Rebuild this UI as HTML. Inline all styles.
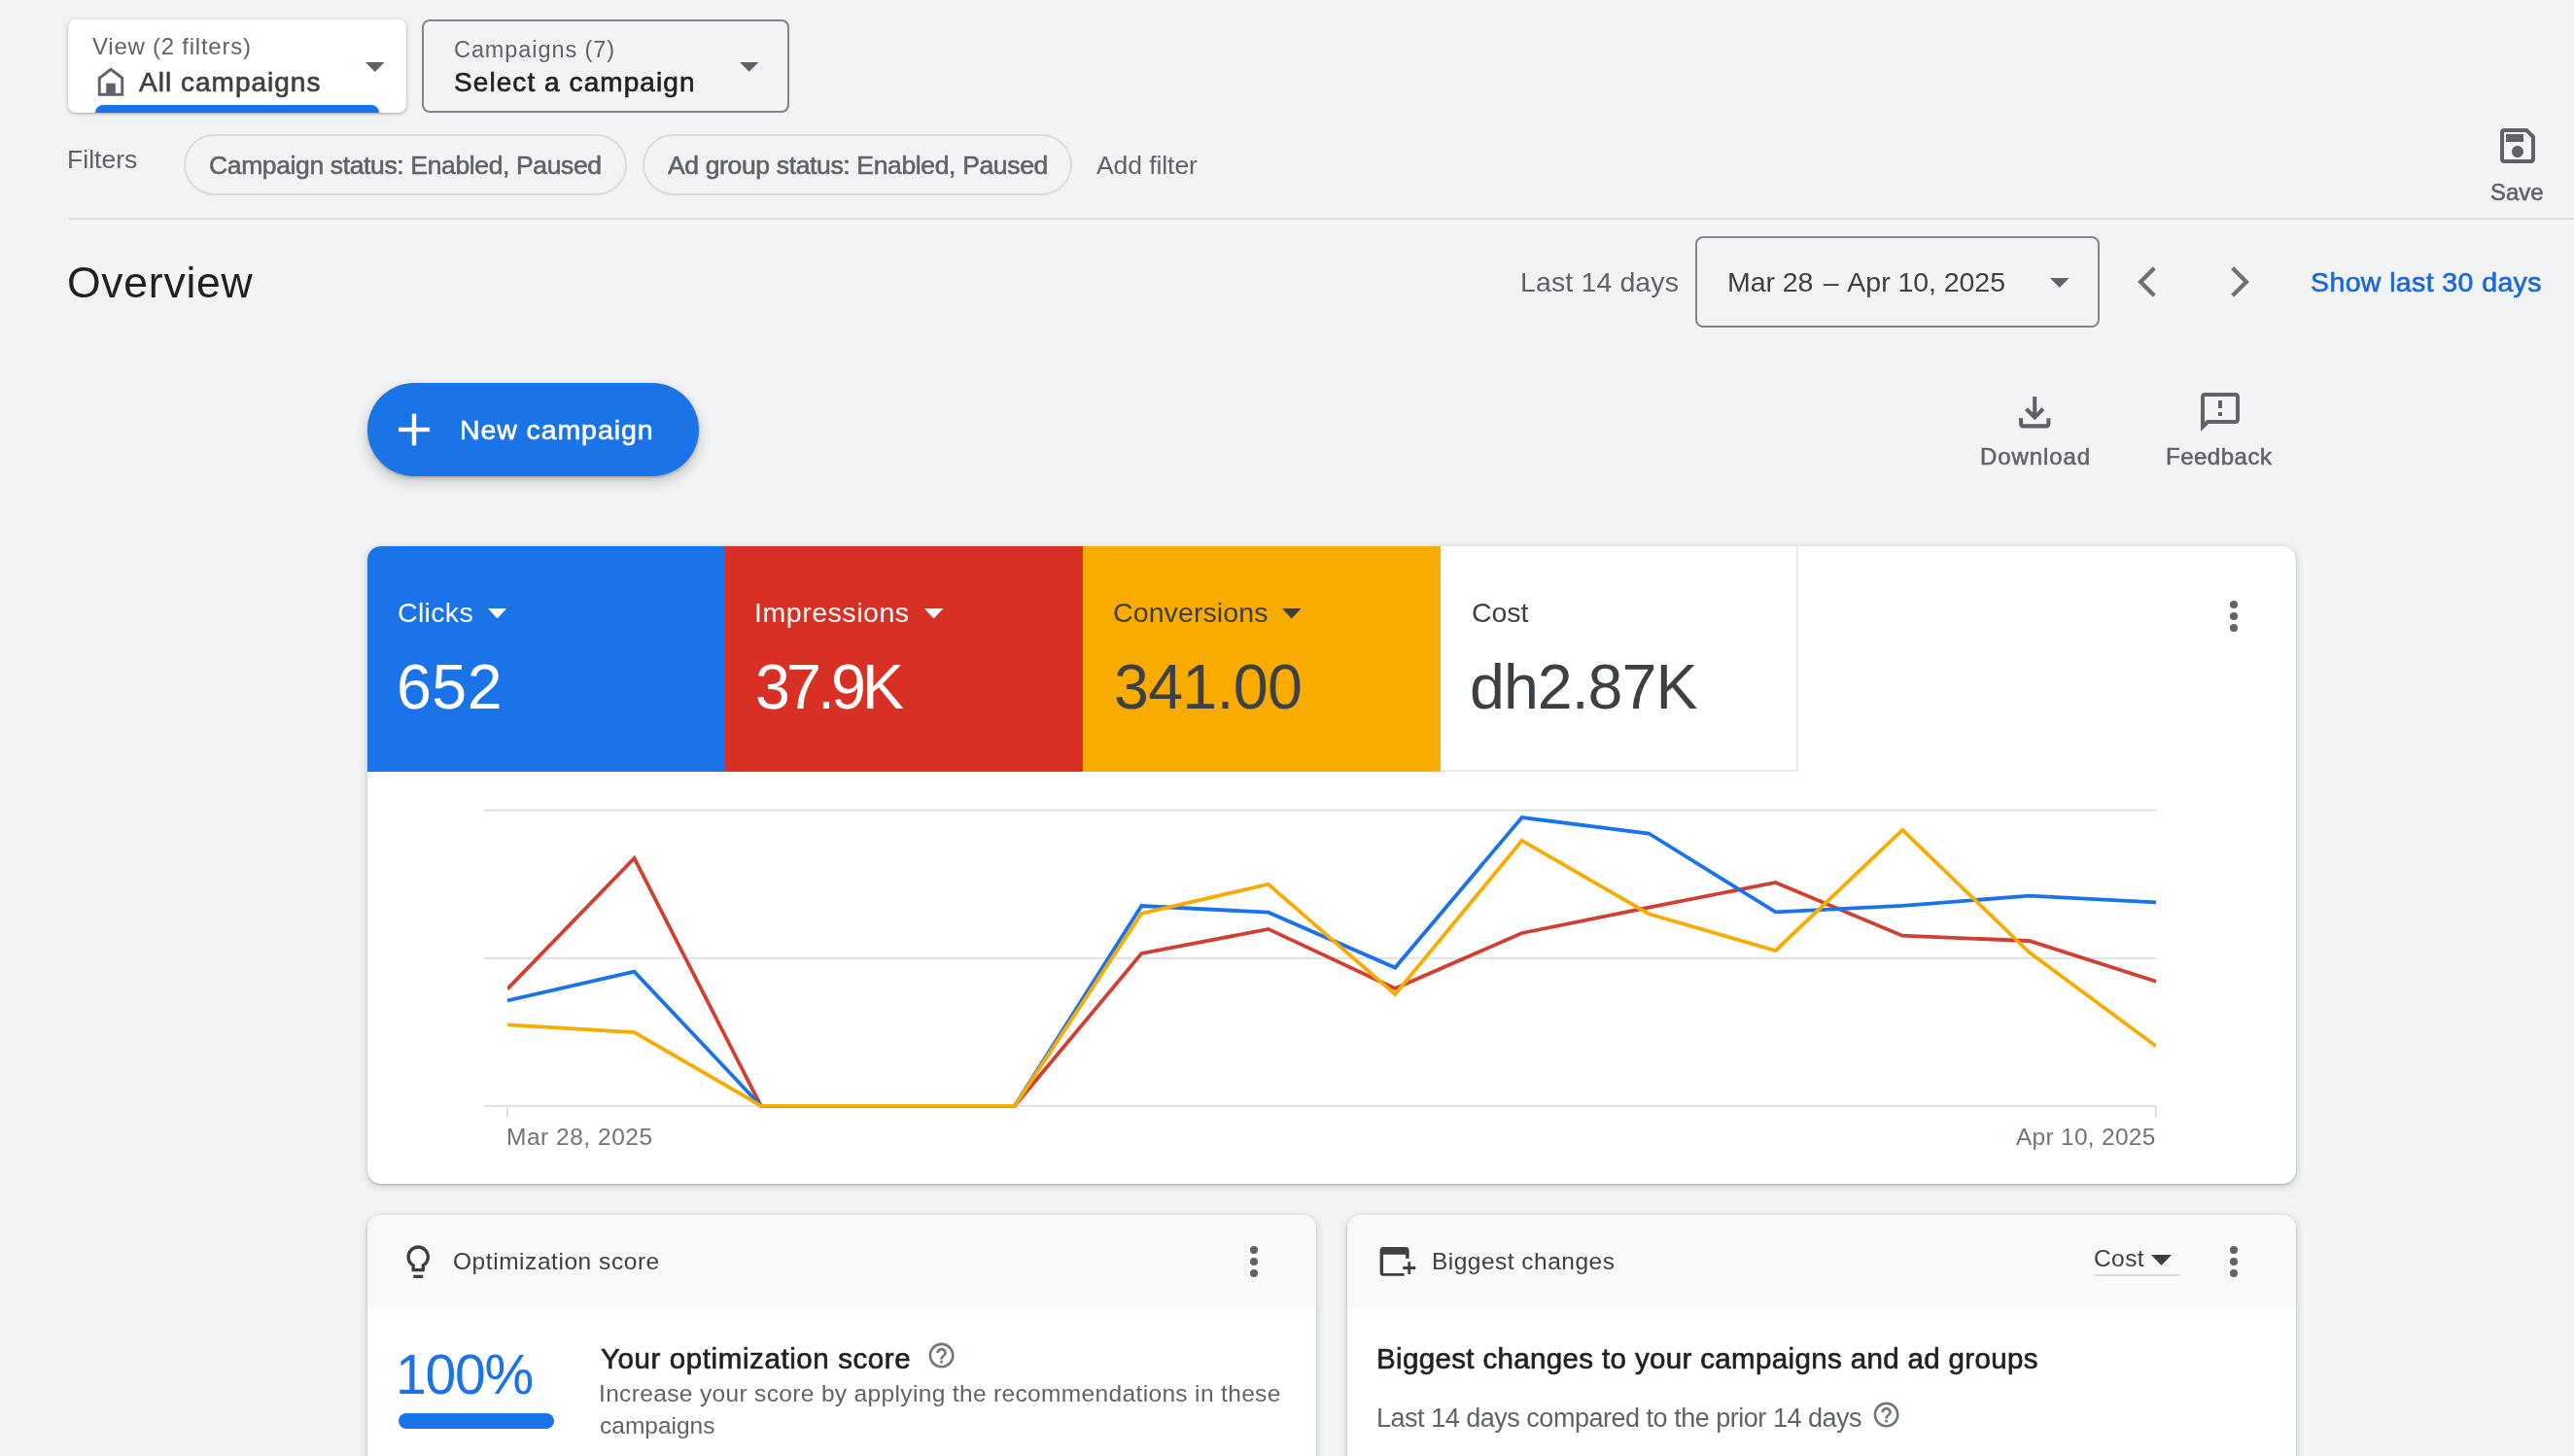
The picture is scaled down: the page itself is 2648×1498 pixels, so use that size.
<!DOCTYPE html><html><head><meta charset="utf-8"><title>Overview</title><style>
*{margin:0;padding:0;box-sizing:border-box}
html,body{width:2648px;height:1498px;overflow:hidden;background:#f1f3f4;font-family:"Liberation Sans",sans-serif}
.t{position:absolute;white-space:nowrap;line-height:1;will-change:transform}
.a{position:absolute}
</style></head><body>
<div class="a" style="left:70px;top:20px;width:348px;height:96px;background:#fff;border-radius:8px;box-shadow:0 1px 2px rgba(60,64,67,.3),0 1px 4px 1px rgba(60,64,67,.15)"></div>
<div class="a" style="left:98px;top:107.5px;width:292px;height:8.5px;background:#1a73e8;border-radius:8px 8px 0 0"></div>
<svg class="a" style="left:0;top:0" width="200" height="120"><path d="M102.25,80.3 L114,71.3 L125.75,80.3 L125.75,97.3 L102.25,97.3 Z" fill="none" stroke="#5f6368" stroke-width="2.9"/><rect x="109.2" y="85.7" width="9.6" height="12" fill="#5f6368"/></svg>
<svg class="a" style="left:376.0px;top:63.9px" width="19.4" height="10.1" viewBox="0 0 19.4 10.1"><path d="M0,0 L19.4,0 L9.7,10.1 Z" fill="#5f6368"/></svg>
<div class="a" style="left:434px;top:20px;width:378px;height:96px;border:2px solid #80868b;border-radius:8px"></div>
<svg class="a" style="left:760.9px;top:64.2px" width="19.4" height="9.8" viewBox="0 0 19.4 9.8"><path d="M0,0 L19.4,0 L9.7,9.8 Z" fill="#5f6368"/></svg>
<div class="a" style="left:189.4px;top:138.2px;width:455.2px;height:63px;border:2px solid #dadce0;border-radius:32px"></div>
<div class="a" style="left:661.2px;top:138.2px;width:441.4px;height:63px;border:2px solid #dadce0;border-radius:32px"></div>
<div class="a" style="left:70px;top:224px;width:2578px;height:2px;background:#dadce0"></div>
<svg class="a" style="left:2566px;top:125.8px" width="48" height="48" viewBox="0 0 24 24"><path fill="#5f6368" d="M17 3H5c-1.11 0-2 .9-2 2v14c0 1.1.89 2 2 2h14c1.1 0 2-.9 2-2V7l-4-4zm2 16H5V5h11.17L19 7.83V19zm-7-7c-1.66 0-3 1.34-3 3s1.34 3 3 3 3-1.34 3-3-1.34-3-3-3zM6 6h9v4H6z"/></svg>
<div class="a" style="left:1744px;top:243px;width:416px;height:94px;border:2px solid #80868b;border-radius:8px"></div>
<svg class="a" style="left:2109.0px;top:285.8px" width="19.7" height="10.0" viewBox="0 0 19.7 10.0"><path d="M0,0 L19.7,0 L9.8,10.0 Z" fill="#5f6368"/></svg>
<svg class="a" style="left:2190px;top:268px" width="140" height="44"><path d="M26.3,7.8 L12.1,22 L26.3,36.2" fill="none" stroke="#707070" stroke-width="4.3"/><path d="M106.7,7.8 L120.9,22 L106.7,36.2" fill="none" stroke="#707070" stroke-width="4.3"/></svg>
<div class="a" style="left:378px;top:394px;width:341px;height:96px;background:#1b73e8;border-radius:48px;box-shadow:0 2px 3px rgba(60,64,67,.3),0 6px 10px 4px rgba(60,64,67,.15)"></div>
<svg class="a" style="left:405px;top:420px" width="42" height="42"><rect x="5" y="19.8" width="32" height="4.4" fill="#fff"/><rect x="18.8" y="5.7" width="4.4" height="32.6" fill="#fff"/></svg>
<svg class="a" style="left:2069.17px;top:399.52px" width="48.46" height="48.46" viewBox="0 0 24 24"><path fill="#5f6368" d="M12 16L7 11l1.4-1.45 2.6 2.6V4h2v8.15l2.6-2.6L17 11zm-6 4q-.825 0-1.412-.587Q4 18.825 4 18v-3h2v3h12v-3h2v3q0 .825-.587 1.413Q18.825 20 18 20z"/></svg>
<svg class="a" style="left:2259.75px;top:399.9px" width="48" height="48" viewBox="0 0 24 24"><path fill="#5f6368" d="M20 2H4c-1.1 0-1.99.9-1.99 2L2 22l4-4h14c1.1 0 2-.9 2-2V4c0-1.1-.9-2-2-2zm0 14H5.17l-.59.59-.58.58V4h16v12zm-9-4h2v2h-2zm0-6h2v4h-2z"/></svg>
<div class="a" style="left:378px;top:562px;width:1984px;height:656px;background:#fff;border-radius:14px;box-shadow:0 1px 2px rgba(60,64,67,.3),0 2px 6px 2px rgba(60,64,67,.15);overflow:hidden"><div class="a" style="left:0;top:0;width:368px;height:232px;background:#1a73e8"></div><div class="a" style="left:368px;top:0;width:368px;height:232px;background:#d93025"></div><div class="a" style="left:736px;top:0;width:368px;height:232px;background:#f9ab00"></div><div class="a" style="left:1104px;top:0;width:368px;height:232px;border-right:2px solid #e8eaed;border-bottom:2px solid #e8eaed"></div></div>
<svg class="a" style="left:502.0px;top:625.5px" width="19.0" height="10.5" viewBox="0 0 19.0 10.5"><path d="M0,0 L19.0,0 L9.5,10.5 Z" fill="#ffffff"/></svg>
<svg class="a" style="left:950.5px;top:625.5px" width="19.3" height="10.5" viewBox="0 0 19.3 10.5"><path d="M0,0 L19.3,0 L9.6,10.5 Z" fill="#ffffff"/></svg>
<svg class="a" style="left:1319.0px;top:625.5px" width="19.4" height="10.5" viewBox="0 0 19.4 10.5"><path d="M0,0 L19.4,0 L9.7,10.5 Z" fill="#3c4043"/></svg>
<div class="a" style="left:2293.6px;top:617.9px;width:8.2px;height:8.2px;border-radius:50%;background:#5f6368"></div><div class="a" style="left:2293.6px;top:629.9px;width:8.2px;height:8.2px;border-radius:50%;background:#5f6368"></div><div class="a" style="left:2293.6px;top:641.9px;width:8.2px;height:8.2px;border-radius:50%;background:#5f6368"></div>
<svg style="position:absolute;left:0;top:0" width="2648" height="1498" viewBox="0 0 2648 1498"><rect x="498" y="832.6" width="1720" height="2" fill="#e0e0e0"/><rect x="498" y="984.8" width="1720" height="2" fill="#e0e0e0"/><rect x="498" y="1136.8" width="1720" height="2" fill="#e0e0e0"/><rect x="521" y="1138" width="2" height="12" fill="#e0e0e0"/><rect x="2217" y="1138" width="2" height="12" fill="#e0e0e0"/><defs><clipPath id="cc"><rect x="522" y="780" width="1696" height="400"/></clipPath></defs><g clip-path="url(#cc)"><polyline points="522.0,1017.6 652.5,883.0 782.9,1137.8 913.4,1137.8 1043.8,1137.8 1174.3,981.0 1304.8,955.9 1435.2,1017.0 1565.7,960.0 1696.2,933.6 1826.6,908.0 1957.1,962.7 2087.5,968.0 2218.0,1009.7" fill="none" stroke="#d23f31" stroke-width="3.8" stroke-linejoin="miter" stroke-miterlimit="10"/><polyline points="522.0,1029.4 652.5,999.7 782.9,1137.8 913.4,1137.8 1043.8,1137.8 1174.3,932.0 1304.8,938.7 1435.2,995.6 1565.7,841.0 1696.2,857.5 1826.6,938.4 1957.1,931.8 2087.5,921.7 2218.0,928.3" fill="none" stroke="#1a73e8" stroke-width="3.8" stroke-linejoin="miter" stroke-miterlimit="10"/><polyline points="522.0,1054.3 652.5,1062.0 782.9,1137.8 913.4,1137.8 1043.8,1137.8 1174.3,940.0 1304.8,909.7 1435.2,1023.0 1565.7,864.9 1696.2,940.2 1826.6,978.0 1957.1,853.8 2087.5,979.8 2218.0,1076.3" fill="none" stroke="#f9ab00" stroke-width="3.8" stroke-linejoin="miter" stroke-miterlimit="10"/></g></svg>
<div class="a" style="left:378.0px;top:1250px;width:976.0px;height:300px;background:#fff;border-radius:14px;box-shadow:0 1px 2px rgba(60,64,67,.3),0 2px 6px 2px rgba(60,64,67,.15);overflow:hidden"><div class="a" style="left:0;top:0;width:100%;height:95.5px;background:#f8f9fa"></div></div>
<div class="a" style="left:1385.5px;top:1250px;width:976.5px;height:300px;background:#fff;border-radius:14px;box-shadow:0 1px 2px rgba(60,64,67,.3),0 2px 6px 2px rgba(60,64,67,.15);overflow:hidden"><div class="a" style="left:0;top:0;width:100%;height:95.5px;background:#f8f9fa"></div></div>
<div class="a" style="left:1285.6px;top:1281.7px;width:8.2px;height:8.2px;border-radius:50%;background:#5f6368"></div><div class="a" style="left:1285.6px;top:1293.7px;width:8.2px;height:8.2px;border-radius:50%;background:#5f6368"></div><div class="a" style="left:1285.6px;top:1305.7px;width:8.2px;height:8.2px;border-radius:50%;background:#5f6368"></div>
<div class="a" style="left:2293.6px;top:1281.7px;width:8.2px;height:8.2px;border-radius:50%;background:#5f6368"></div><div class="a" style="left:2293.6px;top:1293.7px;width:8.2px;height:8.2px;border-radius:50%;background:#5f6368"></div><div class="a" style="left:2293.6px;top:1305.7px;width:8.2px;height:8.2px;border-radius:50%;background:#5f6368"></div>
<svg class="a" style="left:409.77px;top:1277.88px" width="40.46" height="40.46" viewBox="0 0 24 24"><path fill="#3c4043" d="M9 21c0 .55.45 1 1 1h4c.55 0 1-.45 1-1v-1H9v1zm3-19C8.14 2 5 5.14 5 9c0 2.38 1.19 4.470 3 5.74V17c0 .55.45 1 1 1h6c.55 0 1-.45 1-1v-2.26c1.81-1.27 3-3.36 3-5.74 0-3.86-3.14-7-7-7zm2.85 11.1l-.85.6V16h-4v-2.3l-.85-.6C7.8 12.16 7 10.63 7 9c0-2.76 2.24-5 5-5s5 2.24 5 5c0 1.63-.8 3.160-2.150 4.1z"/></svg>
<svg class="a" style="left:1412px;top:1274px" width="52" height="48"><path fill="#3c4043" d="M7.6,12.6 Q7.6,9.07 11.1,9.07 L34.1,9.07 Q37.6,9.07 37.6,12.6 L37.6,20.8 L34.1,20.8 L34.1,16.8 L11.05,16.8 L11.05,35.9 L32.6,35.9 L32.6,38.7 L11.1,38.7 Q7.6,38.7 7.6,35.2 Z"/><rect x="36.3" y="24.2" width="2.8" height="12.7" fill="#3c4043"/><rect x="31.2" y="29" width="13" height="3" fill="#3c4043"/></svg>
<div class="a" style="left:409.7px;top:1454.3px;width:160px;height:15.5px;border-radius:8px;background:#1a73e8"></div>
<svg class="a" style="left:953.3px;top:1379.3px" width="31.2" height="31.2" viewBox="0 0 24 24"><path fill="#70757a" d="M11 18h2v-2h-2v2zm1-16C6.48 2 2 6.48 2 12s4.48 10 10 10 10-4.48 10-10S17.54 2 12 2zm0 18c-4.41 0-8-3.59-8-8s3.59-8 8-8 8 3.59 8 8-3.59 8-8 8zm0-14c-2.210 0-4 1.79-4 4h2c0-1.1.9-2 2-2s2 .9 2 2c0 2-3 1.75-3 5h2c0-2.25 3-2.5 3-5 0-2.21-1.79-4-4-4z"/></svg>
<svg class="a" style="left:1924.9px;top:1440.0px" width="31.2" height="31.2" viewBox="0 0 24 24"><path fill="#70757a" d="M11 18h2v-2h-2v2zm1-16C6.48 2 2 6.48 2 12s4.48 10 10 10 10-4.48 10-10S17.54 2 12 2zm0 18c-4.41 0-8-3.59-8-8s3.59-8 8-8 8 3.59 8 8-3.59 8-8 8zm0-14c-2.210 0-4 1.79-4 4h2c0-1.1.9-2 2-2s2 .9 2 2c0 2-3 1.75-3 5h2c0-2.25 3-2.5 3-5 0-2.21-1.79-4-4-4z"/></svg>
<svg class="a" style="left:2213.0px;top:1291.0px" width="21.0" height="11.0" viewBox="0 0 21.0 11.0"><path d="M0,0 L21.0,0 L10.5,11.0 Z" fill="#3c4043"/></svg>
<div class="a" style="left:2155px;top:1311px;width:87px;height:2px;background:#dadce0"></div>
<div class="t" id="t_view" style="left:94.59px;top:36.01px;font-size:24.00px;letter-spacing:0.753px;color:#5f6368;">View (2 filters)</div>
<div class="t" id="t_allc" style="left:142.95px;top:71.41px;font-size:28.00px;letter-spacing:1.013px;color:#3c4043;-webkit-text-stroke:0.62px #3c4043;">All campaigns</div>
<div class="t" id="t_camps" style="left:467.41px;top:39.60px;font-size:23.50px;letter-spacing:0.910px;color:#5f6368;">Campaigns (7)</div>
<div class="t" id="t_select" style="left:467.33px;top:70.60px;font-size:28.00px;letter-spacing:1.071px;color:#202124;-webkit-text-stroke:0.62px #202124;">Select a campaign</div>
<div class="t" id="t_filters" style="left:69.03px;top:151.10px;font-size:26.50px;letter-spacing:0.032px;color:#5f6368;">Filters</div>
<div class="t" id="t_chip1" style="left:215.25px;top:157.41px;font-size:26.50px;letter-spacing:-0.367px;color:#5f6368;-webkit-text-stroke:0.58px #5f6368;">Campaign status: Enabled, Paused</div>
<div class="t" id="t_chip2" style="left:686.95px;top:157.41px;font-size:26.50px;letter-spacing:-0.353px;color:#5f6368;-webkit-text-stroke:0.58px #5f6368;">Ad group status: Enabled, Paused</div>
<div class="t" id="t_addf" style="left:1127.55px;top:157.41px;font-size:26.50px;letter-spacing:-0.076px;color:#5f6368;">Add filter</div>
<div class="t" id="t_save" style="left:2562.41px;top:186.01px;font-size:24.00px;letter-spacing:-0.016px;color:#5f6368;-webkit-text-stroke:0.53px #5f6368;">Save</div>
<div class="t" id="t_over" style="left:69.19px;top:268.71px;font-size:44.50px;letter-spacing:0.749px;color:#202124;">Overview</div>
<div class="t" id="t_last14" style="left:1564.36px;top:276.40px;font-size:28.50px;letter-spacing:0.123px;color:#5f6368;">Last 14 days</div>
<div class="t" id="t_date" style="left:1776.96px;top:276.40px;font-size:28.50px;letter-spacing:-0.051px;color:#3c4043;">Mar 28 <span style="margin:0 2.5px">–</span> Apr 10, 2025</div>
<div class="t" id="t_show30" style="left:2376.51px;top:276.21px;font-size:28.50px;letter-spacing:0.388px;color:#1967d2;-webkit-text-stroke:0.63px #1967d2;">Show last 30 days</div>
<div class="t" id="t_newc" style="left:473.06px;top:427.90px;font-size:28.50px;letter-spacing:0.907px;color:#ffffff;-webkit-text-stroke:0.63px #ffffff;">New campaign</div>
<div class="t" id="t_dl" style="left:2036.53px;top:458.21px;font-size:24.00px;letter-spacing:0.897px;color:#5f6368;-webkit-text-stroke:0.53px #5f6368;">Download</div>
<div class="t" id="t_fb" style="left:2228.03px;top:458.21px;font-size:24.00px;letter-spacing:0.504px;color:#5f6368;-webkit-text-stroke:0.53px #5f6368;">Feedback</div>
<div class="t" id="t_clicks" style="left:409.25px;top:615.51px;font-size:28.50px;letter-spacing:0.335px;color:#ffffff;">Clicks</div>
<div class="t" id="t_impr" style="left:776.37px;top:615.51px;font-size:28.50px;letter-spacing:0.542px;color:#ffffff;">Impressions</div>
<div class="t" id="t_conv" style="left:1145.15px;top:615.51px;font-size:28.50px;letter-spacing:0.107px;color:#3c4043;">Conversions</div>
<div class="t" id="t_cost" style="left:1513.55px;top:615.51px;font-size:28.50px;letter-spacing:-0.051px;color:#3c4043;">Cost</div>
<div class="t" id="t_v1" style="left:407.72px;top:674.71px;font-size:64.50px;letter-spacing:0.447px;color:#ffffff;">652</div>
<div class="t" id="t_v2" style="left:777.14px;top:674.71px;font-size:64.50px;letter-spacing:-3.895px;color:#ffffff;">37.9K</div>
<div class="t" id="t_v3" style="left:1145.54px;top:674.71px;font-size:64.50px;letter-spacing:-0.701px;color:#3c4043;">341.00</div>
<div class="t" id="t_v4" style="left:1512.29px;top:674.71px;font-size:64.50px;letter-spacing:-0.980px;color:#3c4043;">dh2.87K</div>
<div class="t" id="t_d1" style="left:520.99px;top:1158.01px;font-size:24.50px;letter-spacing:0.515px;color:#70757a;">Mar 28, 2025</div>
<div class="t" id="t_d2" style="left:2074.35px;top:1158.01px;font-size:24.50px;letter-spacing:0.279px;color:#70757a;">Apr 10, 2025</div>
<div class="t" id="t_opt" style="left:465.64px;top:1286.01px;font-size:24.50px;letter-spacing:0.550px;color:#3c4043;">Optimization score</div>
<div class="t" id="t_pct" style="left:407.36px;top:1385.71px;font-size:57.00px;letter-spacing:-1.174px;color:#1a73e8;">100%</div>
<div class="t" id="t_your" style="left:617.65px;top:1383.01px;font-size:29.50px;letter-spacing:0.596px;color:#202124;-webkit-text-stroke:0.65px #202124;">Your optimization score</div>
<div class="t" id="t_incr" style="left:616.04px;top:1422.01px;font-size:24.50px;letter-spacing:0.346px;color:#5f6368;">Increase your score by applying the recommendations in these</div>
<div class="t" id="t_incr2" style="left:617.26px;top:1454.51px;font-size:24.50px;letter-spacing:0.000px;color:#5f6368;">campaigns</div>
<div class="t" id="t_big" style="left:1472.89px;top:1286.01px;font-size:24.50px;letter-spacing:0.481px;color:#3c4043;">Biggest changes</div>
<div class="t" id="t_costdd" style="left:2153.56px;top:1283.01px;font-size:24.50px;letter-spacing:0.411px;color:#3c4043;">Cost</div>
<div class="t" id="t_bigh" style="left:1416.18px;top:1383.01px;font-size:29.50px;letter-spacing:0.356px;color:#202124;-webkit-text-stroke:0.65px #202124;">Biggest changes to your campaigns and ad groups</div>
<div class="t" id="t_l14" style="left:1416.39px;top:1445.51px;font-size:27.00px;letter-spacing:-0.481px;color:#5f6368;">Last 14 days compared to the prior 14 days</div>
</body></html>
